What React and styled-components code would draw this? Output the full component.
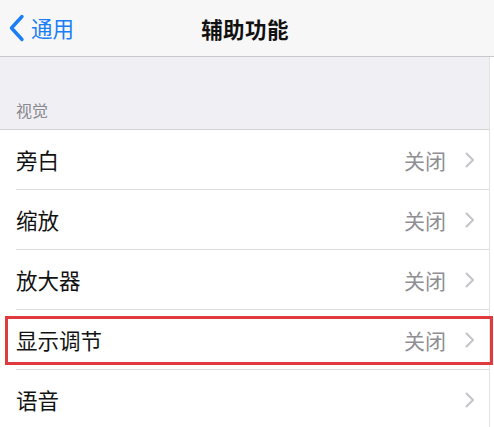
import React from "react";
import styled, { createGlobalStyle } from "styled-components";

const GlobalStyle = createGlobalStyle`
  html, body {
    margin: 0;
    padding: 0;
    background: #ffffff;
  }
  body {
    font-family: "Noto Sans CJK SC", "Noto Sans", sans-serif;
    -webkit-font-smoothing: antialiased;
  }
`;

const Screen = styled.div`
  width: 494px;
  height: 427px;
  overflow: hidden;
  background: #ffffff;
`;

const NavBar = styled.header`
  height: 56px;
  display: grid;
  grid-template-columns: 1fr auto 1fr;
  align-items: center;
  padding-right: 4px;
  background: #f7f7f7;
  border-bottom: 1px solid #c9c9cd;
`;

const BackButton = styled.div`
  display: flex;
  align-items: center;
  gap: 6px;
  padding-left: 8px;
  color: #1a7ef6;
  font-size: 21.5px;
  line-height: 1;
`;

const Title = styled.div`
  font-size: 21.5px;
  font-weight: 700;
  color: #111111;
  letter-spacing: 0.4px;
`;

const Content = styled.main`
  width: 489px;
  border-right: 1px solid #e3e3e6;
`;

const SectionHeader = styled.div`
  height: 73px;
  box-sizing: border-box;
  display: flex;
  align-items: flex-end;
  padding: 0 0 7px 16px;
  background: #efeff4;
  border-bottom: 1px solid #d2d2d6;
  color: #8a8a8f;
  font-size: 16px;
`;

const Row = styled.div`
  position: relative;
  height: 59px;
  display: flex;
  align-items: center;
  padding-left: 16px;
  padding-right: 14px;

  &::before {
    content: "";
    position: absolute;
    left: 16px;
    right: 0;
    bottom: -1px;
    height: 1px;
    background: #dcdce0;
  }

  & + & {
    margin-top: 1px;
  }

  ${({ $highlighted }) =>
    $highlighted &&
    `
    &::after {
      content: "";
      position: absolute;
      left: 5px;
      right: -4px;
      top: 6px;
      bottom: 4px;
      border: 3px solid #e0393e;
      pointer-events: none;
    }
  `}
`;

const Label = styled.span`
  flex: 1;
  font-size: 21.5px;
  color: #111111;
`;

const Value = styled.span`
  font-size: 21px;
  color: #8e8e93;
  margin-right: 19px;
`;

const BackChevron = () => (
  <svg width="17" height="28" viewBox="0 0 17 28">
    <path
      d="M14 2.5 L3.5 14 L14 25.5"
      fill="none"
      stroke="#1a7ef6"
      strokeWidth="3.4"
      strokeLinecap="round"
      strokeLinejoin="round"
    />
  </svg>
);

const Chevron = () => (
  <svg width="10" height="16" viewBox="0 0 10 16">
    <path
      d="M1.5 1.5 L8 8 L1.5 14.5"
      fill="none"
      stroke="#c4c4c8"
      strokeWidth="2"
      strokeLinecap="round"
      strokeLinejoin="round"
    />
  </svg>
);

const items = [
  { label: "旁白", value: "关闭" },
  { label: "缩放", value: "关闭" },
  { label: "放大器", value: "关闭" },
  { label: "显示调节", value: "关闭", highlighted: true },
  { label: "语音" },
];

export default function App() {
  return (
    <Screen>
      <GlobalStyle />
      <NavBar>
        <BackButton>
          <BackChevron />
          <span>通用</span>
        </BackButton>
        <Title>辅助功能</Title>
        <span />
      </NavBar>
      <Content>
        <SectionHeader>视觉</SectionHeader>
        {items.map((item) => (
          <Row key={item.label} $highlighted={item.highlighted}>
            <Label>{item.label}</Label>
            {item.value && <Value>{item.value}</Value>}
            <Chevron />
          </Row>
        ))}
      </Content>
    </Screen>
  );
}
